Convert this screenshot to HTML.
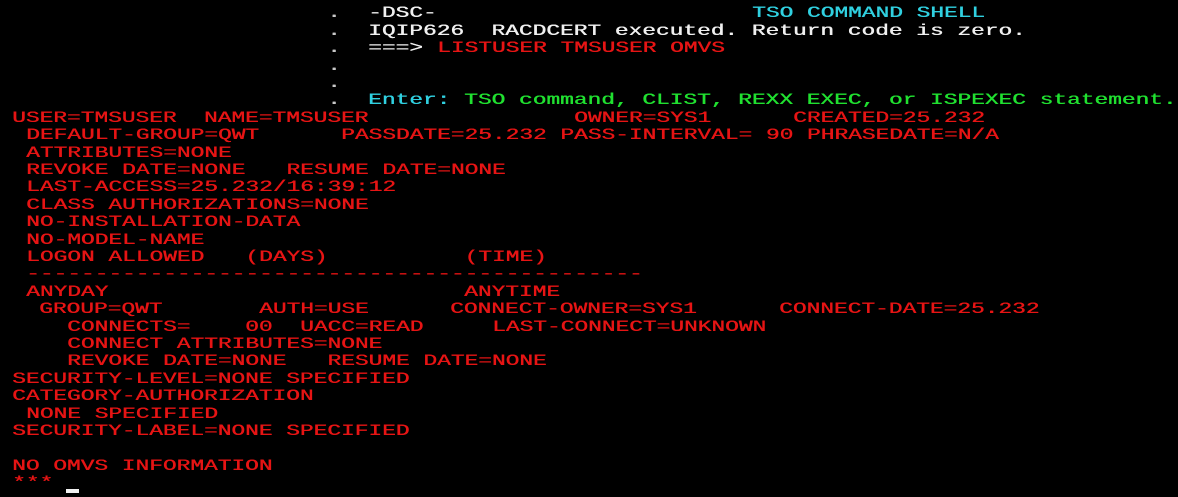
<!DOCTYPE html>
<html><head><meta charset="utf-8"><style>
html,body{margin:0;padding:0;background:#000;width:1178px;height:497px;overflow:hidden}
.s{position:absolute;top:calc(5.3px + var(--r)*17.4px);left:calc(12px + var(--c)*13.7px);
font-family:"Liberation Mono",monospace;font-size:16px;font-weight:normal;line-height:17.4px;
white-space:pre;transform:scaleX(1.427);transform-origin:0 0;color:#e61414;text-shadow:0.4px 0 0 currentColor}
.w{color:#f0f0f0}.t{color:#30d0e0}.g{color:#20e030}.d{color:#c8c8c8}
.cur{position:absolute;left:66px;top:489px;width:13px;height:4px;background:#f0f0f0}
</style></head><body>
<div class="s d" style="--r:0;--c:23">.</div><div class="s w" style="--r:0;--c:26">-DSC-</div><div class="s t" style="--r:0;--c:54">TSO COMMAND SHELL</div>
<div class="s d" style="--r:1;--c:23">.</div><div class="s w" style="--r:1;--c:26">IQIP626  RACDCERT executed. Return code is zero.</div>
<div class="s d" style="--r:2;--c:23">.</div><div class="s w" style="--r:2;--c:26">===&gt;</div><div class="s" style="--r:2;--c:31">LISTUSER TMSUSER OMVS</div>
<div class="s d" style="--r:3;--c:23">.</div>
<div class="s d" style="--r:4;--c:23">.</div>
<div class="s d" style="--r:5;--c:23">.</div><div class="s t" style="--r:5;--c:26">Enter:</div><div class="s g" style="--r:5;--c:33">TSO command, CLIST, REXX EXEC, or ISPEXEC statement.</div>
<div class="s" style="--r:6;--c:0">USER=TMSUSER  NAME=TMSUSER</div><div class="s" style="--r:6;--c:41">OWNER=SYS1</div><div class="s" style="--r:6;--c:57">CREATED=25.232</div>
<div class="s" style="--r:7;--c:1">DEFAULT-GROUP=QWT</div><div class="s" style="--r:7;--c:24">PASSDATE=25.232 PASS-INTERVAL= 90 PHRASEDATE=N/A</div>
<div class="s" style="--r:8;--c:1">ATTRIBUTES=NONE</div>
<div class="s" style="--r:9;--c:1">REVOKE DATE=NONE   RESUME DATE=NONE</div>
<div class="s" style="--r:10;--c:1">LAST-ACCESS=25.232/16:39:12</div>
<div class="s" style="--r:11;--c:1">CLASS AUTHORIZATIONS=NONE</div>
<div class="s" style="--r:12;--c:1">NO-INSTALLATION-DATA</div>
<div class="s" style="--r:13;--c:1">NO-MODEL-NAME</div>
<div class="s" style="--r:14;--c:1">LOGON ALLOWED   (DAYS)          (TIME)</div>
<div class="s" style="--r:15;--c:1">---------------------------------------------</div>
<div class="s" style="--r:16;--c:1">ANYDAY</div><div class="s" style="--r:16;--c:33">ANYTIME</div>
<div class="s" style="--r:17;--c:2">GROUP=QWT</div><div class="s" style="--r:17;--c:18">AUTH=USE</div><div class="s" style="--r:17;--c:32">CONNECT-OWNER=SYS1</div><div class="s" style="--r:17;--c:56">CONNECT-DATE=25.232</div>
<div class="s" style="--r:18;--c:4">CONNECTS=</div><div class="s" style="--r:18;--c:17">00</div><div class="s" style="--r:18;--c:21">UACC=READ</div><div class="s" style="--r:18;--c:35">LAST-CONNECT=UNKNOWN</div>
<div class="s" style="--r:19;--c:4">CONNECT ATTRIBUTES=NONE</div>
<div class="s" style="--r:20;--c:4">REVOKE DATE=NONE   RESUME DATE=NONE</div>
<div class="s" style="--r:21;--c:0">SECURITY-LEVEL=NONE SPECIFIED</div>
<div class="s" style="--r:22;--c:0">CATEGORY-AUTHORIZATION</div>
<div class="s" style="--r:23;--c:1">NONE SPECIFIED</div>
<div class="s" style="--r:24;--c:0">SECURITY-LABEL=NONE SPECIFIED</div>
<div class="s" style="--r:26;--c:0">NO OMVS INFORMATION</div>
<div class="s" style="--r:27;--c:0">***</div>
<div class="cur"></div>
</body></html>
